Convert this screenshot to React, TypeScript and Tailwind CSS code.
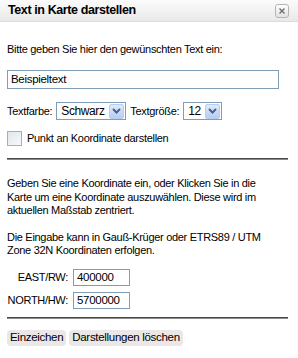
import React from 'react';

const font = { fontFamily: '"Liberation Sans", Arial, sans-serif' };

const Chevron: React.FC = () => (
  <div className="w-[15px] h-[15px] rounded-[2px] bg-gradient-to-b from-[#dfe9fb] to-[#b5cdf5] border border-[#b9cdef] flex items-center justify-center">
    <svg width="9" height="6" viewBox="0 0 9 6">
      <path d="M1 1 L4.5 4.5 L8 1" stroke="#4d6185" strokeWidth="2" fill="none" />
    </svg>
  </div>
);

const FakeSelect: React.FC<{ value: string; width: string }> = ({ value, width }) => (
  <div className={`${width} h-[18px] border border-[#7f9db9] bg-white flex items-center justify-between pl-[4px] pr-px`}>
    <span className="text-[12px] tracking-[-0.4px] leading-none text-black">{value}</span>
    <Chevron />
  </div>
);

const Divider: React.FC = () => <div className="h-[2px] bg-[#4a4a4a] border-b border-[#8a8a8a] mr-[3px]" />;

export default function App() {
  return (
    <div className="w-[298px] h-[358px] bg-white text-black text-[11px] leading-[13px] tracking-[-0.3px] overflow-hidden" style={font}>
      {/* Titelleiste */}
      <div className="h-[22px] bg-gradient-to-b from-[#fbfbfb] to-[#e9e9e9] border-b border-[#dcdcdc] flex items-center justify-between pl-[8px] pr-[9px]">
        <span className="text-[12.5px] font-bold tracking-[-0.4px]">Text in Karte darstellen</span>
        <div className="w-[14px] h-[14px] rounded-[3px] border border-[#b4b4b4] bg-gradient-to-b from-white to-[#e2e2e2] flex items-center justify-center">
          <svg width="6" height="6" viewBox="0 0 6 6">
            <path d="M0.5 0.5 L5.5 5.5 M5.5 0.5 L0.5 5.5" stroke="#6e6e6e" strokeWidth="1.4" />
          </svg>
        </div>
      </div>

      <div className="pl-[7px] pr-[7px]">
        <p className="mt-[21px]">Bitte geben Sie hier den gewünschten Text ein:</p>

        <div className="mt-[14px] w-[272px] h-[19px] border border-[#7f9db9] pl-[3px] flex items-center text-[11.5px]">
          Beispieltext
        </div>

        <div className="mt-[13px] flex items-center gap-[4px]">
          <span>Textfarbe:</span>
          <FakeSelect value="Schwarz" width="w-[70px]" />
          <span>Textgröße:</span>
          <FakeSelect value="12" width="w-[39px]" />
        </div>

        <div className="mt-[11px] flex items-center gap-[5px]">
          <div className="w-[15px] h-[15px] border border-[#9fb0c3] bg-gradient-to-br from-[#dfe6ee] to-[#f8f9fb]" />
          <span>Punkt an Koordinate darstellen</span>
        </div>

        <div className="mt-[12px]">
          <Divider />
        </div>

        <p className="mt-[17px] w-[266px] leading-[13.5px]">
          Geben Sie eine Koordinate ein, oder Klicken Sie in die Karte um eine Koordinate auszuwählen. Diese wird im
          aktuellen Maßstab zentriert.
        </p>
        <p className="mt-[13px] w-[266px] leading-[13.5px]">
          Die Eingabe kann in Gauß-Krüger oder ETRS89 / UTM Zone 32N Koordinaten erfolgen.
        </p>

        <div className="mt-[11px] grid grid-cols-[61px_57px] gap-x-[5px] gap-y-[6px] items-center">
          <span className="text-right">EAST/RW:</span>
          <div className="h-[17px] border border-[#7f9db9] pl-[3px] flex items-center text-[11.5px]">400000</div>
          <span className="text-right">NORTH/HW:</span>
          <div className="h-[17px] border border-[#7f9db9] pl-[3px] flex items-center text-[11.5px]">5700000</div>
        </div>

        <div className="mt-[8px]">
          <Divider />
        </div>

        <div className="mt-[11px] flex gap-[3px] text-[11.5px]">
          <button className="h-[16px] px-[3px] rounded-[4px] bg-[#ebe7e7] leading-none">Einzeichen</button>
          <button className="h-[16px] px-[3px] rounded-[4px] bg-[#ebe7e7] leading-none">Darstellungen löschen</button>
        </div>
      </div>
    </div>
  );
}
